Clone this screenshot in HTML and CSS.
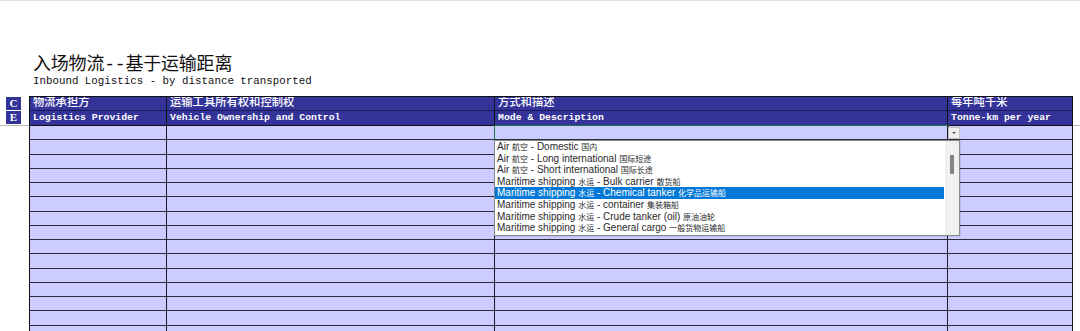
FILE: index.html
```html
<!DOCTYPE html>
<html>
	<head>
		<meta charset="UTF-8">
		<title>入场物流</title>
		<link rel="stylesheet" href="styles.css">
	</head>
	<body>
		<div class="topline"></div>
		<div class="caption">
			<h1 class="title">入场物流--基于运输距离</h1>
			<p class="subtitle">Inbound Logistics - by distance transported</p>
		</div>

		<!-- 表头：C = 中文, E = English -->
		<div class="sheet-head">
			<div class="tags">
				<span class="tag">C</span>
				<span class="tag">E</span>
			</div>
			<div class="head">
				<div class="hc cn">物流承担方</div>
				<div class="hc cn">运输工具所有权和控制权</div>
				<div class="hc cn">方式和描述</div>
				<div class="hc cn">每年吨千米</div>
				<div class="hc en">Logistics Provider</div>
				<div class="hc en">Vehicle Ownership and Control</div>
				<div class="hc en">Mode &amp; Description</div>
				<div class="hc en">Tonne-km per year</div>
			</div>
			<div class="rest"></div>
		</div>

		<div class="sheet-body">
			<div class="grid">
				<div class="cell"></div><div class="cell"></div><div class="cell active"></div><div class="cell"></div>
				<div class="cell"></div><div class="cell"></div><div class="cell"></div><div class="cell"></div>
				<div class="cell"></div><div class="cell"></div><div class="cell"></div><div class="cell"></div>
				<div class="cell"></div><div class="cell"></div><div class="cell"></div><div class="cell"></div>
				<div class="cell"></div><div class="cell"></div><div class="cell"></div><div class="cell"></div>
				<div class="cell"></div><div class="cell"></div><div class="cell"></div><div class="cell"></div>
				<div class="cell"></div><div class="cell"></div><div class="cell"></div><div class="cell"></div>
				<div class="cell"></div><div class="cell"></div><div class="cell"></div><div class="cell"></div>
				<div class="cell"></div><div class="cell"></div><div class="cell"></div><div class="cell"></div>
				<div class="cell"></div><div class="cell"></div><div class="cell"></div><div class="cell"></div>
				<div class="cell"></div><div class="cell"></div><div class="cell"></div><div class="cell"></div>
				<div class="cell"></div><div class="cell"></div><div class="cell"></div><div class="cell"></div>
				<div class="cell"></div><div class="cell"></div><div class="cell"></div><div class="cell"></div>
				<div class="cell"></div><div class="cell"></div><div class="cell"></div><div class="cell"></div>
				<div class="cell"></div><div class="cell"></div><div class="cell"></div><div class="cell"></div>
			</div>

			<!-- 下拉按钮 + 下拉列表 -->
			<div class="drop-btn"><span class="arrow"></span></div>
			<div class="dropdown">
				<ul class="options">
					<li>Air <span class="zh">航空</span> - Domestic <span class="zh">国内</span></li>
					<li>Air <span class="zh">航空</span> - Long international <span class="zh">国际短途</span></li>
					<li>Air <span class="zh">航空</span> - Short international <span class="zh">国际长途</span></li>
					<li>Maritime shipping <span class="zh">水运</span> - Bulk carrier <span class="zh">散货船</span></li>
					<li class="selected">Maritime shipping <span class="zh">水运</span> - Chemical tanker <span class="zh">化学品运输船</span></li>
					<li>Maritime shipping <span class="zh">水运</span> - container <span class="zh">集装箱船</span></li>
					<li>Maritime shipping <span class="zh">水运</span> - Crude tanker (oil) <span class="zh">原油油轮</span></li>
					<li>Maritime shipping <span class="zh">水运</span> - General cargo <span class="zh">一般货物运输船</span></li>
				</ul>
				<div class="scrollbar"><div class="thumb"></div></div>
			</div>
		</div>
	</body>
</html>
```

FILE: styles.css
```css
*{
	margin: 0;
	padding: 0;
	box-sizing: border-box;
}
ul{
	list-style: none;
}
body{
	background: #fff;
	overflow: hidden;
	font-family: "Liberation Mono", "Noto Sans CJK SC", monospace;
}
.topline{
	height: 1px;
	background: #e4e4e4;
}

/* 标题 */
.caption{
	padding: 54px 0 0 33px;
}
.caption .title{
	font-size: 18px;
	font-weight: normal;
	line-height: 20px;
	color: #111;
	letter-spacing: -0.2px;
}
.caption .subtitle{
	font-size: 10.8px;
	line-height: 13px;
	color: #111;
}

/* 表头 */
.sheet-head{
	display: flex;
	margin-top: 8px;
}
.sheet-head .tags{
	width: 29px;
	padding: 1px 0 0 6px;
	border-bottom: 1px solid #b9b9b9;
	display: flex;
	flex-direction: column;
	gap: 1px;
}
.sheet-head .tag{
	width: 15px;
	height: 13px;
	background: #333399;
	color: #fff;
	font-family: "Liberation Serif", serif;
	font-weight: bold;
	font-size: 11px;
	line-height: 13px;
	text-align: center;
}
.sheet-head .rest{
	flex: 1;
	border-bottom: 1px solid #b9b9b9;
}
.head{
	display: grid;
	grid-template-columns: 137px 328px 453px 125px;
	grid-template-rows: 14px 15px;
	border-top: 1px solid #111;
	border-left: 1px solid #111;
	background: #333399;
}
.head .hc{
	border-right: 1px solid #111;
	border-bottom: 1px solid #1c1c55;
	color: #fff;
	padding-left: 3px;
	white-space: nowrap;
	overflow: hidden;
}
.head .cn{
	font-size: 11.3px;
	line-height: 13px;
	font-weight: 500;
}
.head .en{
	font-size: 9.8px;
	line-height: 14px;
	font-weight: bold;
	border-bottom-color: #111;
}

/* 数据区 */
.sheet-body{
	position: relative; /*父相*/
	padding-left: 29px;
}
.grid{
	display: grid;
	width: 1044px;
	grid-template-columns: 137px 328px 453px 125px;
	grid-auto-rows: 14.28px;
	border-left: 1px solid #111;
}
.grid .cell{
	background: #ccccff;
	border-right: 1px solid #1a1a22;
	border-bottom: 1px solid #2a2a3a;
}
.grid .cell.active{
	outline: 1px solid #217346;
	outline-offset: 0;
	position: relative;
}

/* 下拉按钮 */
.drop-btn{
	position: absolute; /*子绝*/
	left: 948px;
	top: 1px;
	width: 12px;
	height: 12px;
	background: #efefef;
	border: 1px solid #c4c4c4;
	display: flex;
	align-items: center;
	justify-content: center;
}
.drop-btn .arrow{
	width: 0;
	height: 0;
	border-left: 2px solid transparent;
	border-right: 2px solid transparent;
	border-top: 2px solid #555;
}

/* 下拉列表 */
.dropdown{
	position: absolute;
	left: 494px;
	top: 14px;
	width: 466px;
	height: 96px;
	background: #fff;
	border: 1px solid #8a8a8a;
	display: flex;
	box-shadow: 1px 1px 0 rgba(0,0,0,0.08);
}
.dropdown .options{
	flex: 1;
}
.dropdown .options li{
	height: 11.6px;
	line-height: 11.6px;
	padding-left: 2px;
	margin-right: 1px;
	font-family: "Liberation Sans", "Noto Sans CJK SC", sans-serif;
	font-size: 10px;
	color: #2a2a2a;
	white-space: nowrap;
}
.dropdown .options .zh{
	font-family: "Noto Sans CJK SC", sans-serif;
	font-size: 8px;
}
.dropdown .options li.selected{
	background: #0078d7;
	color: #fff;
}
.dropdown .scrollbar{
	width: 14px;
	background: #f0f0f0;
	padding-top: 14px;
}
.dropdown .scrollbar .thumb{
	width: 4px;
	height: 19px;
	margin: 0 auto;
	background: #858585;
}
```
